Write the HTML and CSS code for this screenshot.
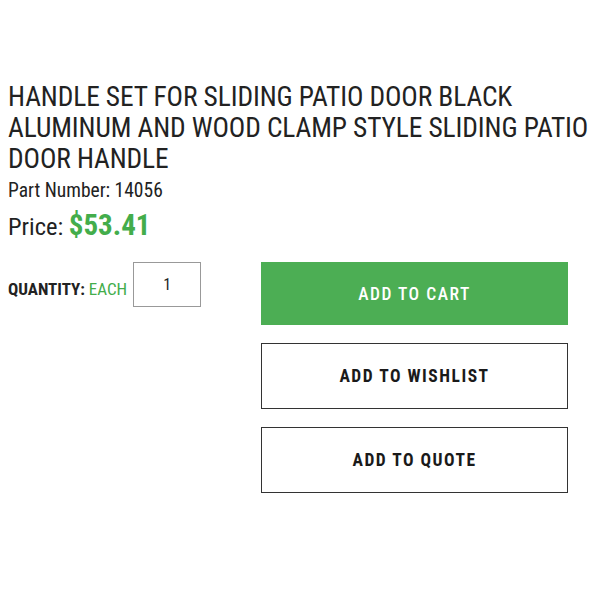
FILE: index.html
```html
<!DOCTYPE html>
<html lang="en">
<head>
  <meta charset="UTF-8" />
  <meta name="viewport" content="width=device-width, initial-scale=1.0" />
  <title>Handle Set for Sliding Patio Door</title>
  <link rel="stylesheet" href="styles.css">
</head>
<body>
  <div class="product">
    <h1 class="title">HANDLE SET FOR SLIDING PATIO DOOR BLACK ALUMINUM AND WOOD CLAMP STYLE SLIDING PATIO DOOR HANDLE</h1>
    <div class="part">Part Number: 14056</div>
    <div class="price">Price: <span class="amount">$53.41</span></div>

    <div class="purchase">
      <div class="qty">
        <label for="qty"><b>QUANTITY:</b> <span class="unit">EACH</span></label>
        <input type="text" id="qty" value="1">
      </div>
      <div class="actions">
        <button class="btn btn-cart">ADD TO CART</button>
        <button class="btn">ADD TO WISHLIST</button>
        <button class="btn">ADD TO QUOTE</button>
      </div>
    </div>
  </div>
</body>
</html>
```

FILE: styles.css
```css
body {
  margin: 0;
  font-family: 'Roboto Condensed', Roboto, sans-serif;
  font-stretch: condensed;
  background-color: #ffffff;
  color: #222;
}
.product {
  padding: 82px 8px 0 8px;
}
.title {
  font-size: 27.4px;
  font-weight: 400;
  line-height: 31px;
  margin: 0;
  width: 590px;
  letter-spacing: -0.1px;
}
.part {
  font-size: 19.5px;
  line-height: 24px;
  margin-top: 4px;
}
.price {
  font-size: 24.5px;
  line-height: 32px;
  margin-top: 6px;
}
.amount {
  color: #43ad4b;
  font-weight: 700;
  font-size: 29px;
}
.purchase {
  display: flex;
  margin-top: 19px;
}
.qty {
  width: 253px;
  display: flex;
  align-items: center;
  gap: 6px;
  height: 45px;
}
.qty label {
  font-size: 17px;
  margin-top: 8px;
}
.unit {
  color: #43ad4b;
}
.qty input {
  width: 68px;
  height: 45px;
  border: 1px solid #999;
  padding: 0;
  text-align: center;
  font-family: inherit;
  font-size: 16px;
  color: #222;
  box-sizing: border-box;
}
.actions {
  width: 307px;
  display: flex;
  flex-direction: column;
  gap: 18px;
}
.btn {
  height: 66px;
  background: #fff;
  border: 1.5px solid #333;
  font-family: inherit;
  font-stretch: condensed;
  font-size: 17.5px;
  font-weight: 700;
  letter-spacing: 1.5px;
  color: #1a1a1a;
  cursor: pointer;
}
.btn-cart {
  height: 63px;
  background: #4cae54;
  border-color: #4cae54;
  color: #fff;
  font-weight: 500;
}
```
